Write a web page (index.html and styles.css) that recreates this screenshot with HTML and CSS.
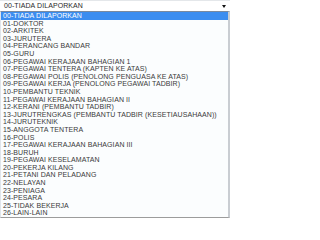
FILE: index.html
```html
<!DOCTYPE html>
<html>
<head>
<meta charset="utf-8">
<link rel="stylesheet" href="styles.css">
</head>
<body>
<div class="dropdown">
  <div class="select">
    <span class="value">00-TIADA DILAPORKAN</span>
    <span class="arrow"></span>
  </div>
  <ul class="list">
    <li class="item selected">00-TIADA DILAPORKAN</li>
    <li class="item">01-DOKTOR</li>
    <li class="item">02-ARKITEK</li>
    <li class="item">03-JURUTERA</li>
    <li class="item">04-PERANCANG BANDAR</li>
    <li class="item">05-GURU</li>
    <li class="item">06-PEGAWAI KERAJAAN BAHAGIAN 1</li>
    <li class="item">07-PEGAWAI TENTERA (KAPTEN KE ATAS)</li>
    <li class="item">08-PEGAWAI POLIS (PENOLONG PENGUASA KE ATAS)</li>
    <li class="item">09-PEGAWAI KERJA (PENOLONG PEGAWAI TADBIR)</li>
    <li class="item">10-PEMBANTU TEKNIK</li>
    <li class="item">11-PEGAWAI KERAJAAN BAHAGIAN II</li>
    <li class="item">12-KERANI (PEMBANTU TADBIR)</li>
    <li class="item">13-JURUTRENGKAS (PEMBANTU TADBIR (KESETIAUSAHAAN))</li>
    <li class="item">14-JURUTEKNIK</li>
    <li class="item">15-ANGGOTA TENTERA</li>
    <li class="item">16-POLIS</li>
    <li class="item">17-PEGAWAI KERAJAAN BAHAGIAN III</li>
    <li class="item">18-BURUH</li>
    <li class="item">19-PEGAWAI KESELAMATAN</li>
    <li class="item">20-PEKERJA KILANG</li>
    <li class="item">21-PETANI DAN PELADANG</li>
    <li class="item">22-NELAYAN</li>
    <li class="item">23-PENIAGA</li>
    <li class="item">24-PESARA</li>
    <li class="item">25-TIDAK BEKERJA</li>
    <li class="item">26-LAIN-LAIN</li>
  </ul>
</div>
</body>
</html>
```

FILE: styles.css
```css
html, body {
  margin: 0;
  padding: 0;
  background: #ffffff;
}

body {
  width: 230px;
  height: 219px;
  overflow: hidden;
  font-family: "Liberation Sans", Arial, sans-serif;
  font-size: 7px;
  letter-spacing: 0.08px;
  color: #333333;
}

.dropdown {
  display: flex;
  flex-direction: column;
  width: 230px;
}

.select {
  height: 10px;
  border-top: 1px solid #e4e7ea;
  display: flex;
  align-items: center;
  justify-content: space-between;
  padding: 0 4px 0 4px;
  background: #ffffff;
}

.value {
  line-height: 10px;
  color: #2a2a2a;
}

.arrow {
  width: 0;
  height: 0;
  border-left: 2.5px solid transparent;
  border-right: 2.5px solid transparent;
  border-top: 3px solid #111111;
  margin-top: 1px;
}

.list {
  list-style: none;
  margin: 0;
  padding: 0;
  border-top: 1px solid #7a8a9e;
  border-left: 1px solid #dfe4ea;
  border-right: 2px solid #c9cdd2;
  border-bottom: 1px solid #9c9c9c;
  background: #fbfdfe;
  width: 227px;
}

.item {
  height: 7.6px;
  line-height: 7.6px;
  padding-left: 2px;
  white-space: nowrap;
  color: #3a3a3a;
}

.selected {
  background: #3b8df0;
  color: #ffffff;
}
```
